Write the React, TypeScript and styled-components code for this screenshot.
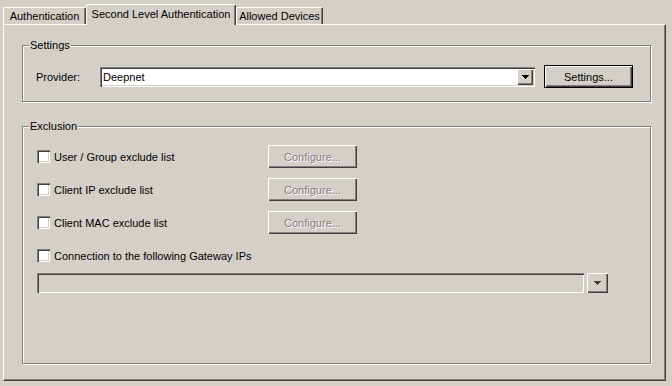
import React from 'react';
import styled, { createGlobalStyle } from 'styled-components';

const GlobalStyle = createGlobalStyle`
  html, body {
    margin: 0;
    padding: 0;
    background: #d4d0c8;
  }
  body {
    font-family: "Liberation Sans", Arial, sans-serif;
    font-size: 11px;
    color: #000000;
  }
`;

const raised = `
  box-shadow: inset 1px 1px 0 #ffffff, inset -1px -1px 0 #404040, inset -2px -2px 0 #808080;
`;

const sunken = `
  box-shadow: inset 1px 1px 0 #808080, inset 2px 2px 0 #404040, inset -1px -1px 0 #ffffff, inset -2px -2px 0 #d4d0c8;
`;

const Arrow = ({ color = '#000000' }: { color?: string }) => (
  <svg width="7" height="4" viewBox="0 0 7 4" shapeRendering="crispEdges">
    <path d="M0 0h7v1h-1v1h-1v1h-1v1h-1v-1h-1v-1h-1v-1h-1z" fill={color} />
  </svg>
);

const App = () => {
  return (
    <>
      <GlobalStyle />
      <Page>
        <TabStrip>
          <Tab $width={83}>Authentication</Tab>
          <Tab $width={150} $active>Second Level Authentication</Tab>
          <Tab $width={87}>Allowed Devices</Tab>
        </TabStrip>

        <Panel>
          <Group $bottom={13} $right={17}>
            <Legend>Settings</Legend>
            <ProviderRow>
              <FieldLabel>Provider:</FieldLabel>
              <Combo>
                <ComboText>Deepnet</ComboText>
                <DropButton>
                  <Arrow />
                </DropButton>
              </Combo>
              <DefaultButton>Settings...</DefaultButton>
            </ProviderRow>
          </Group>

          <Group $bottom={70} $right={15} $gap={18}>
            <Legend>Exclusion</Legend>
            <Rows>
              <CheckRow>
                <CheckLabel>
                  <CheckBox />
                  User / Group exclude list
                </CheckLabel>
                <PushButton disabled>Configure...</PushButton>
              </CheckRow>
              <CheckRow>
                <CheckLabel>
                  <CheckBox />
                  Client IP exclude list
                </CheckLabel>
                <PushButton disabled>Configure...</PushButton>
              </CheckRow>
              <CheckRow>
                <CheckLabel>
                  <CheckBox />
                  Client MAC exclude list
                </CheckLabel>
                <PushButton disabled>Configure...</PushButton>
              </CheckRow>
              <CheckRow>
                <CheckLabel>
                  <CheckBox />
                  Connection to the following Gateway IPs
                </CheckLabel>
              </CheckRow>
            </Rows>
            <GatewayRow>
              <GatewayBox />
              <SideDropButton>
                <Arrow color="#404040" />
              </SideDropButton>
            </GatewayRow>
          </Group>
        </Panel>
      </Page>
    </>
  );
};

const Page = styled.div`
  width: 672px;
  height: 386px;
  box-sizing: border-box;
  padding: 4px 6px 5px 3px;
  display: flex;
  flex-direction: column;
`;

const TabStrip = styled.div`
  display: flex;
  align-items: flex-end;
  height: 20px;
`;

const Tab = styled.div<{ $width: number; $active?: boolean }>`
  position: relative;
  z-index: ${p => (p.$active ? 2 : 1)};
  width: ${p => p.$width}px;
  height: ${p => (p.$active ? 21 : 17)}px;
  margin-bottom: ${p => (p.$active ? -1 : 0)}px;
  box-sizing: border-box;
  display: flex;
  align-items: center;
  justify-content: center;
  padding-bottom: ${p => (p.$active ? 2 : 0)}px;
  background: #d4d0c8;
  border-top: 1px solid #ffffff;
  border-left: 1px solid #ffffff;
  border-right: 1px solid #404040;
  border-radius: 2px 2px 0 0;
  box-shadow: inset -1px 0 0 #808080;
  white-space: nowrap;
`;

const Panel = styled.div`
  flex: 1;
  box-sizing: border-box;
  border-top: 1px solid #ffffff;
  border-left: 1px solid #ffffff;
  border-right: 1px solid #404040;
  border-bottom: 1px solid #404040;
  box-shadow: inset -1px -1px 0 #808080;
  padding: 14px 14px 0 18px;
  display: flex;
  flex-direction: column;
`;

const Group = styled.fieldset<{ $bottom: number; $right: number; $gap?: number }>`
  margin: ${p => p.$gap ?? 0}px 0 0 0;
  min-width: 0;
  border: 1px solid #808080;
  box-shadow: inset 1px 1px 0 #ffffff, 1px 1px 0 #ffffff;
  padding: 12px ${p => p.$right}px ${p => p.$bottom}px 14px;
`;

const Legend = styled.legend`
  line-height: 13px;
  padding: 0 1px;
  margin-left: -8px;
  background: #d4d0c8;
`;

const ProviderRow = styled.div`
  display: flex;
  align-items: center;
  height: 23px;
  margin-top: 1px;
  margin-left: -1px;
`;

const FieldLabel = styled.span`
  width: 64px;
`;

const Combo = styled.div<{ $disabled?: boolean }>`
  flex: 1;
  height: 20px;
  box-sizing: border-box;
  padding: 2px;
  display: flex;
  background: ${p => (p.$disabled ? '#d4d0c8' : '#ffffff')};
  ${sunken}
`;

const ComboText = styled.span`
  flex: 1;
  padding-left: 1px;
  line-height: 16px;
`;

const DropButton = styled.span`
  width: 16px;
  height: 16px;
  display: flex;
  align-items: center;
  justify-content: center;
  background: #d4d0c8;
  ${raised}
`;

const PushButton = styled.button`
  width: 89px;
  height: 23px;
  padding: 0;
  border: none;
  background: #d4d0c8;
  font: inherit;
  color: #000000;
  ${raised}

  &:disabled {
    color: #808080;
    text-shadow: 1px 1px 0 #ffffff;
  }
`;

const DefaultButton = styled(PushButton)`
  margin-left: 9px;
  box-sizing: border-box;
  border: 1px solid #000000;
`;

const Rows = styled.div`
  display: flex;
  flex-direction: column;
  gap: 10px;
`;

const CheckRow = styled.div`
  display: grid;
  grid-template-columns: 231px 89px;
  align-items: center;
  height: 23px;
`;

const CheckLabel = styled.label`
  display: flex;
  align-items: center;
  gap: 4px;
  white-space: nowrap;
`;

const CheckBox = styled.span`
  width: 13px;
  height: 13px;
  flex: none;
  background: #ffffff;
  ${sunken}
`;

const GatewayRow = styled.div`
  display: flex;
  gap: 3px;
  margin-top: 6px;
`;

const GatewayBox = styled(Combo).attrs({ $disabled: true })`
  flex: none;
  width: 547px;
`;

const SideDropButton = styled(DropButton)`
  width: 21px;
  height: 20px;
`;

export default App;
